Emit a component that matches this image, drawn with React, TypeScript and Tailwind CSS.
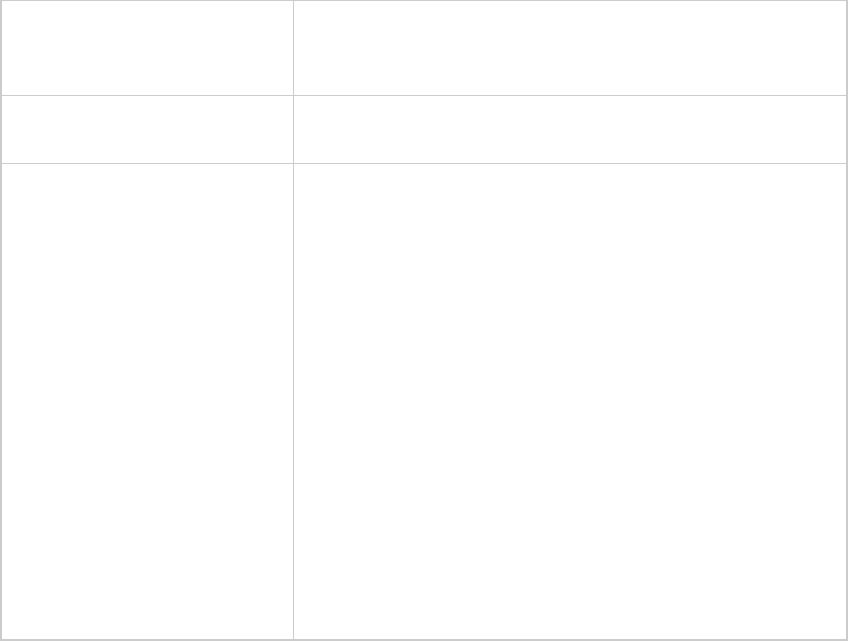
export default function App() {
  return (
    <div className="w-[848px] h-[641px] box-border bg-white border-l-2 border-t border-r-2 border-b-2 border-[#cccccc] grid grid-cols-[292px_1fr] grid-rows-[95px_68px_1fr]">
      <div className="border-r border-b border-[#cccccc]"></div>
      <div className="border-b border-[#cccccc]"></div>
      <div className="border-r border-b border-[#cccccc]"></div>
      <div className="border-b border-[#cccccc]"></div>
      <div className="border-r border-[#cccccc]"></div>
      <div></div>
    </div>
  );
}
